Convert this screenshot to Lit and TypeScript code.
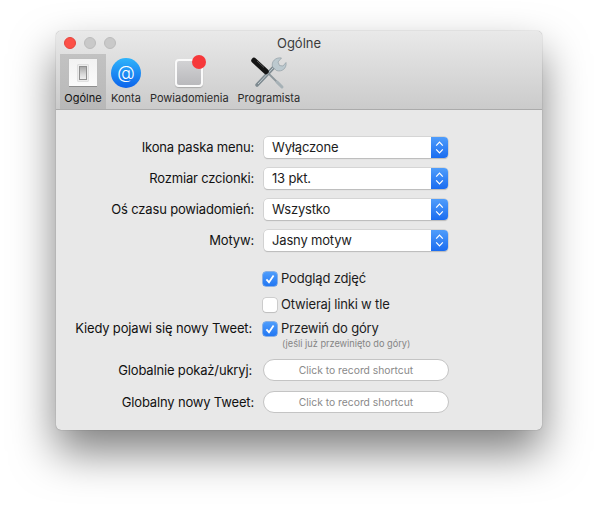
import { LitElement, html, css, svg } from 'lit'
import { customElement } from 'lit/decorators.js'

const selects = [
  ['Ikona paska menu:', 'Wyłączone'],
  ['Rozmiar czcionki:', '13 pkt.'],
  ['Oś czasu powiadomień:', 'Wszystko'],
  ['Motyw:', 'Jasny motyw']
]

const checkIcon = svg`<svg class="tick" viewBox="0 0 14 14"><path d="M3.4 7.4 L6 10.2 L10.6 3.6" fill="none" stroke="#fff" stroke-width="1.8"/></svg>`

@customElement('app-root')
export class AppRoot extends LitElement {
  static styles = [
    css`
      :host {
        display: block;
        width: 598px;
        height: 510px;
        overflow: hidden;
        background: #fff;
        font-family: Inter, 'Liberation Sans', sans-serif;
        font-size: 13px;
        letter-spacing: -0.17px;
        color: #1c1c1c;
        box-sizing: border-box;
        padding: 31px 56px 0;
      }

      .window {
        width: 486px;
        height: 399px;
        border-radius: 5px;
        background: #e8e8e8;
        box-shadow: 0 22px 44px rgba(0, 0, 0, 0.5), 0 0 1px rgba(0, 0, 0, 0.5);
        display: flex;
        flex-direction: column;
      }

      .chrome {
        height: 78px;
        border-radius: 5px 5px 0 0;
        background: linear-gradient(#e9e9e9, #cbcbcb);
        border-bottom: 1px solid #ababab;
        display: flex;
        flex-direction: column;
      }

      .titlebar {
        height: 23px;
        flex: none;
        display: flex;
        align-items: center;
        padding-left: 8px;
        position: relative;
      }

      .light {
        width: 12px;
        height: 12px;
        border-radius: 50%;
        background: #c9c9c9;
        border: 0.5px solid #bcbcbc;
        box-sizing: border-box;
        margin-right: 8px;
      }

      .light.close {
        background: #fc5047;
        border-color: #e5443c;
      }

      .title {
        position: absolute;
        left: 0;
        right: 0;
        text-align: center;
        color: #3c3c3c;
        letter-spacing: 0;
      }

      .tabs {
        display: flex;
        flex: 1;
        padding-left: 4px;
        gap: 1px;
      }

      .tab {
        display: flex;
        flex-direction: column;
        align-items: center;
        padding: 0 4px;
        font-size: 11px;
        letter-spacing: 0;
        color: #2b2b2b;
      }

      .tab.on {
        width: 46px;
        box-sizing: border-box;
        background: linear-gradient(#c2c2c2, #b8b8b8);
        color: #111;
      }

      .glyph {
        height: 36px;
        margin-top: 1px;
        display: flex;
        align-items: center;
        justify-content: center;
      }

      .tab span {
        line-height: 14px;
      }

      .form {
        display: grid;
        grid-template-columns: 198px 186px;
        column-gap: 9px;
        row-gap: 10px;
        padding-top: 27px;
        align-items: center;
      }

      .label {
        text-align: right;
        white-space: nowrap;
        color: #111;
        line-height: 13px;
      }

      .label.inset {
        padding-right: 2px;
      }

      .label.top {
        align-self: start;
      }

      .select {
        height: 21px;
        width: 184.5px;
        margin-left: 0.5px;
        border-radius: 4px;
        background: #fff;
        box-shadow: 0 0 0 0.5px #c2c2c2, 0 1px 1px rgba(0, 0, 0, 0.22);
        display: flex;
        align-items: center;
        justify-content: space-between;
        padding-left: 8.5px;
        box-sizing: border-box;
        overflow: hidden;
        line-height: 13px;
      }

      .stepper {
        width: 17px;
        height: 21px;
        background: linear-gradient(#4f9dfb, #1a6cf0);
        display: flex;
        align-items: center;
        justify-content: center;
      }

      .stepper svg {
        width: 9px;
        height: 15px;
      }

      .check-row {
        display: flex;
        align-items: flex-start;
        gap: 4px;
        height: 14px;
        line-height: 13px;
      }

      .check-row.first {
        margin-top: 11px;
      }

      .check-row.second {
        margin-top: 2px;
      }

      .box {
        width: 14px;
        height: 14px;
        box-sizing: border-box;
        border-radius: 3px;
        background: #fff;
        box-shadow: 0 0 0 0.5px #b4b4b4, 0 1px 1px rgba(0, 0, 0, 0.12);
        flex: none;
      }

      .box.on {
        background: linear-gradient(#4f9dfb, #2277f3);
        box-shadow: 0 0 0 0.5px #2a78e0;
      }

      .tick {
        display: block;
        width: 14px;
        height: 14px;
      }

      .note {
        grid-column: 2;
        margin-top: -8px;
        padding-left: 19px;
        font-size: 9.2px;
        letter-spacing: 0;
        line-height: 11px;
        color: #858585;
        white-space: nowrap;
      }

      .shortcut {
        height: 22px;
        width: 186px;
        box-sizing: border-box;
        border-radius: 11px;
        background: #fff;
        border: 1px solid #c4c4c4;
        display: flex;
        align-items: center;
        justify-content: center;
        font-size: 10.3px;
        letter-spacing: 0;
        color: #8a8a8a;
      }

      .general {
        width: 28px;
        height: 28px;
        box-sizing: border-box;
        background: linear-gradient(#f2f2f2, #fbfbfb);
        border-bottom: 1px solid #8e8e8e;
        box-shadow: 0 0 0 0.5px #bdbdbd;
        display: flex;
        align-items: center;
        justify-content: center;
      }

      .switch {
        width: 10px;
        height: 16px;
        box-sizing: border-box;
        padding: 1px;
        background: #ececec;
        box-shadow: 0 0 0 0.5px #c8c8c8;
      }

      .switch i {
        display: block;
        height: 100%;
        box-sizing: border-box;
        background: linear-gradient(#a9a9a9, #d8d8d8 60%, #eeeeee);
        border: 1px solid #8f8f8f;
      }

      .at {
        width: 30px;
        height: 30px;
        border-radius: 50%;
        background: linear-gradient(#2fb4fb, #0b63ec);
        display: flex;
        align-items: center;
        justify-content: center;
        color: #fff;
        font-size: 18px;
        font-weight: 300;
        letter-spacing: 0;
        line-height: 30px;
      }

      .notify {
        width: 28px;
        height: 28px;
        box-sizing: border-box;
        border-radius: 4px;
        border: 2px solid #fafafa;
        background: linear-gradient(#d2d2d4, #b9b9bc);
        box-shadow: 0 1px 1px rgba(0, 0, 0, 0.2);
        position: relative;
      }

      .badge {
        position: absolute;
        width: 14px;
        height: 14px;
        border-radius: 50%;
        background: #f6383a;
        top: -6px;
        left: 15px;
      }

      .tools {
        width: 37px;
        height: 36px;
      }
    `
  ]

  renderStepper() {
    return html`<div class="stepper">
      <svg viewBox="0 0 9 15">
        <path d="M1.2 5.6 L4.5 2.2 L7.8 5.6 M1.2 9.4 L4.5 12.8 L7.8 9.4" fill="none" stroke="#fff" stroke-width="1.2" />
      </svg>
    </div>`
  }

  renderTools() {
    return html`<svg class="tools" viewBox="252 55 37 36">
      <path d="M267 70 L282 85" stroke="#8d979c" stroke-width="1.8" />
      <path d="M279 82 L284 87" stroke="#a6b1b6" stroke-width="3" stroke-linecap="round" />
      <path d="M276 67 L259 85" stroke="#7e8a90" stroke-width="3.6" stroke-linecap="round" />
      <path d="M275 68 L260 84" stroke="#c4ced3" stroke-width="1" />
      <path d="M256 60.5 L268 71.5" stroke="#151515" stroke-width="5.5" stroke-linecap="round" />
      <path d="M259 61 L266 67.5" stroke="#555" stroke-width="1" />
      <path
        d="M274.5 67 C273 61.5 277.5 57 283.5 58 L280 62 L281.5 65.5 L285 66 L288 62.5 C289 68 284 72.5 278.5 70.5 Z"
        fill="#bcc9cf"
        stroke="#8a979e"
        stroke-width="0.6" />
    </svg>`
  }

  render() {
    return html`
      <div class="window">
        <div class="chrome">
          <div class="titlebar">
            <div class="light close"></div>
            <div class="light"></div>
            <div class="light"></div>
            <div class="title">Ogólne</div>
          </div>
          <div class="tabs">
            <div class="tab on">
              <div class="glyph"><div class="general"><div class="switch"><i></i></div></div></div>
              <span>Ogólne</span>
            </div>
            <div class="tab">
              <div class="glyph"><div class="at">@</div></div>
              <span>Konta</span>
            </div>
            <div class="tab">
              <div class="glyph"><div class="notify"><div class="badge"></div></div></div>
              <span>Powiadomienia</span>
            </div>
            <div class="tab">
              <div class="glyph">${this.renderTools()}</div>
              <span>Programista</span>
            </div>
          </div>
        </div>
        <div class="form">
          ${selects.map(
            ([label, value]) => html`
              <div class="label">${label}</div>
              <div class="select"><span>${value}</span>${this.renderStepper()}</div>
            `
          )}
          <div></div>
          <div class="check-row first"><div class="box on">${checkIcon}</div>Podgląd zdjęć</div>
          <div></div>
          <div class="check-row second"><div class="box"></div>Otwieraj linki w tle</div>
          <div class="label inset top">Kiedy pojawi się nowy Tweet:</div>
          <div class="check-row"><div class="box on">${checkIcon}</div>Przewiń do góry</div>
          <div class="note">(jeśli już przewinięto do góry)</div>
          <div class="label inset">Globalnie pokaż/ukryj:</div>
          <div class="shortcut">Click to record shortcut</div>
          <div class="label">Globalny nowy Tweet:</div>
          <div class="shortcut">Click to record shortcut</div>
        </div>
      </div>
    `
  }
}
